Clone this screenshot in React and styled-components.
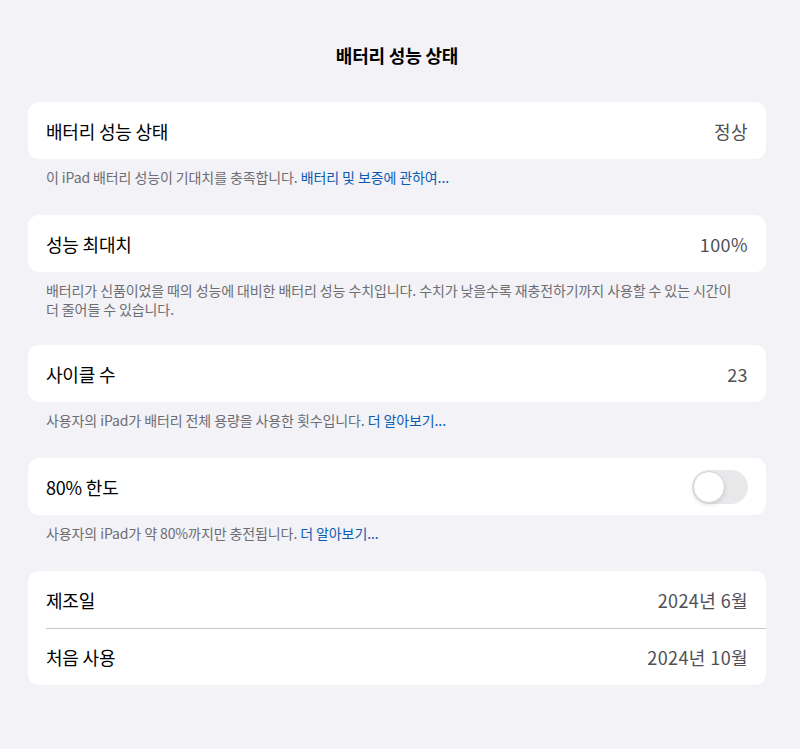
import styled, { createGlobalStyle } from 'styled-components';

const GlobalStyle = createGlobalStyle`
  html, body {
    margin: 0;
    background: #f2f2f7;
  }
  body {
    font-family: "Noto Sans CJK KR", "Noto Sans", sans-serif;
    color: #000;
  }
`;

const Page = styled.div`
  width: 800px;
  min-height: 749px;
  box-sizing: border-box;
  padding: 40px 34px 0 28px;
  background: #f2f2f7;
`;

const Title = styled.h1`
  margin: 0 0 32px;
  font-size: 18px;
  line-height: 30px;
  font-weight: 700;
  text-align: center;
  letter-spacing: -0.2px;
`;

const Section = styled.section`
  display: flex;
  flex-direction: column;
`;

const Card = styled.div`
  background: #fff;
  border-radius: 11px;
  overflow: hidden;
`;

const Row = styled.div`
  display: flex;
  align-items: center;
  justify-content: space-between;
  height: 57px;
  margin-left: 18px;
  padding-right: 18px;
  box-sizing: border-box;
  border-top: ${(p) => (p.$divider ? '1px solid #c8c8cc' : 'none')};
`;

const Label = styled.span`
  font-size: 18px;
  color: #000;
  letter-spacing: -0.2px;
`;

const Value = styled.span`
  font-size: 18px;
  color: #3c3c43;
  opacity: 0.9;
  letter-spacing: 0.4px;
`;

const Footer = styled.p`
  margin: 0;
  padding: ${(p) => (p.$multi ? '9px 18px 26px' : '9px 18px 28px')};
  font-size: 14px;
  line-height: 19px;
  color: #6d6d72;
  letter-spacing: -0.1px;
`;

const Link = styled.a`
  color: #0a5bb3;
  text-decoration: none;
  cursor: pointer;
`;

const Toggle = styled.button`
  position: relative;
  width: 56px;
  height: 34px;
  padding: 0;
  border: none;
  border-radius: 17px;
  background: ${(p) => (p.$on ? '#34c759' : '#e9e9eb')};
  cursor: pointer;

  &::after {
    content: '';
    position: absolute;
    top: 1px;
    left: ${(p) => (p.$on ? '23px' : '1px')};
    width: 32px;
    height: 32px;
    box-sizing: border-box;
    border-radius: 50%;
    background: #fff;
    border: 1px solid #d4d4d6;
    box-shadow: 0 2px 4px rgba(0, 0, 0, 0.12);
  }
`;

export default function App() {
  return (
    <Page>
      <GlobalStyle />
      <Title>배터리 성능 상태</Title>

      <Section>
        <Card>
          <Row>
            <Label>배터리 성능 상태</Label>
            <Value>정상</Value>
          </Row>
        </Card>
        <Footer>
          이 iPad 배터리 성능이 기대치를 충족합니다. <Link>배터리 및 보증에 관하여...</Link>
        </Footer>
      </Section>

      <Section>
        <Card>
          <Row>
            <Label>성능 최대치</Label>
            <Value>100%</Value>
          </Row>
        </Card>
        <Footer $multi>
          배터리가 신품이었을 때의 성능에 대비한 배터리 성능 수치입니다. 수치가 낮을수록 재충전하기까지 사용할 수 있는 시간이
          <br />
          더 줄어들 수 있습니다.
        </Footer>
      </Section>

      <Section>
        <Card>
          <Row>
            <Label>사이클 수</Label>
            <Value>23</Value>
          </Row>
        </Card>
        <Footer>
          사용자의 iPad가 배터리 전체 용량을 사용한 횟수입니다. <Link>더 알아보기...</Link>
        </Footer>
      </Section>

      <Section>
        <Card>
          <Row>
            <Label>80% 한도</Label>
            <Toggle aria-label="80% 한도" />
          </Row>
        </Card>
        <Footer>
          사용자의 iPad가 약 80%까지만 충전됩니다. <Link>더 알아보기...</Link>
        </Footer>
      </Section>

      <Section>
        <Card>
          <Row>
            <Label>제조일</Label>
            <Value>2024년 6월</Value>
          </Row>
          <Row $divider>
            <Label>처음 사용</Label>
            <Value>2024년 10월</Value>
          </Row>
        </Card>
      </Section>
    </Page>
  );
}
